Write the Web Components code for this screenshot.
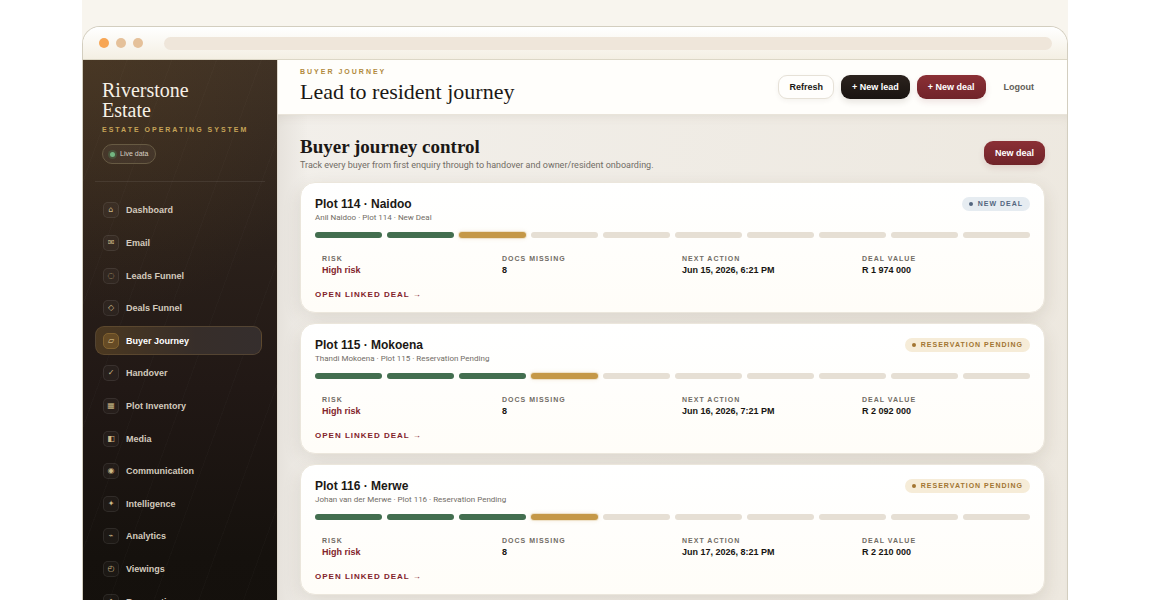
<!DOCTYPE html>
<html lang="en">
<head>
<meta charset="utf-8">
<meta name="viewport" content="width=device-width, initial-scale=1">
<title>Riverstone Estate – Buyer Journey</title>
<style>
html { scrollbar-width: none; }
body {
  margin: 0; background: #fff; color: #1b1815;
  font: 9px/12px "Liberation Sans", Arial, sans-serif;
  --serif: "Liberation Serif", "Times New Roman", serif;
  --text: Roboto, "Liberation Sans", sans-serif;
  --wine: #82232b; --gold: #c59847; --green: #436e4f; --line: #e4dfd4; --muted: #716c65;
}
</style>
</head>
<body>
<estate-app></estate-app>
<script>
const define = (name, html, setup) => {
  const template = document.createElement('template');
  template.innerHTML = html;
  customElements.define(name, class extends HTMLElement {
    constructor() {
      super();
      this.attachShadow({ mode: 'open' }).append(template.content.cloneNode(true));
    }
    connectedCallback() { if (setup) setup(this, this.shadowRoot); }
  });
};

define('browser-frame', `
<style>
:host { display: block; border: 1px solid #d3cebf; border-bottom: 0; border-radius: 18px 18px 0 0; overflow: hidden; background: #fff; }
.chrome { display: flex; align-items: center; gap: 7px; height: 32px; padding: 0 15px 0 16px; background: linear-gradient(#fff, #f4efe3); border-bottom: 1px solid #dcd7c6; }
i { width: 10px; height: 10px; border-radius: 50%; background: #e5c19a; }
i:first-child { background: #f7a654; }
.address { flex: 1; height: 13px; margin-left: 14px; border-radius: 7px; background: #efe6da; }
</style>
<div class="chrome"><i></i><i></i><i></i><div class="address"></div></div>
<slot></slot>`);

define('app-button', `
<style>
:host { display: block; }
button { display: block; height: 24px; padding: 0 10px; border: 1px solid transparent; border-radius: 9px; font: bold 9px/12px "Liberation Sans", Arial, sans-serif; color: #fff; white-space: nowrap; }
:host([kind="plain"]) button { background: #fffefc; color: #1b1815; border-color: #e6e1d7; box-shadow: 0 2px 5px #4030100d; }
:host([kind="dark"]) button { background: linear-gradient(#2c231e, #191411) border-box; box-shadow: 0 3px 6px #3020101f; }
:host([kind="wine"]) button { background: linear-gradient(#8b3035, #702329) border-box; box-shadow: 0 3px 6px #7023291f; }
:host([kind="ghost"]) button { background: none; color: #625d57; }
</style>
<button type="button"><slot></slot></button>`);

define('nav-item', `
<style>
:host { display: flex; align-items: center; }
a { flex: 1; display: flex; align-items: center; gap: 7px; box-sizing: border-box; height: 29px; padding: 0 7px; border: 1px solid transparent; border-radius: 9px; color: #d3cabd; font-weight: bold; text-decoration: none; }
span { box-sizing: border-box; width: 16px; height: 16px; display: grid; place-items: center; border: 1px solid #ffffff14; border-radius: 5px; background: #ffffff08; color: #cdb887; font: 8px/8px "DejaVu Sans", sans-serif; }
:host([active]) a { color: #fff; border-color: #715a3980; background: linear-gradient(90deg, #4b3820, #372e2a 60%, #352e2d); }
:host([active]) span { background: #664b25; border-color: #80612f; color: #ead39c; }
</style>
<a href="#"><span aria-hidden="true"></span><slot></slot></a>`, (host, root) => {
  root.querySelector('span').textContent = host.getAttribute('icon');
  if (host.hasAttribute('active')) root.querySelector('a').setAttribute('aria-current', 'page');
});

define('side-bar', `
<style>
:host { display: block; box-sizing: border-box; padding: 20px 12px 0; border-right: 1px solid #ded8cc; background:
  repeating-linear-gradient(110deg, transparent 0 41px, #ffffff04 41px 42px),
  radial-gradient(circle at 0 0, #6b4d2340, transparent 260px),
  linear-gradient(#3d3025, #2a201a 34%, #211815 58%, #15110d 88%, #14100c); }
.brand { padding: 0 7px 17px; border-bottom: 1px solid #ffffff14; }
h2 { margin: 0; font: 20px/20px var(--serif); color: #f6f0e6; }
p { margin: 6px 0 0; font-size: 7px; line-height: 8px; font-weight: bold; letter-spacing: 2px; color: #c6a458; white-space: nowrap; }
.live { display: inline-flex; align-items: center; gap: 5px; box-sizing: border-box; height: 20px; margin-top: 10px; padding: 0 7px; border: 1px solid #675a43; border-radius: 10px; background: #ffffff0c; color: #d9d1c5; font-size: 7px; vertical-align: top; }
.live i { width: 5px; height: 5px; border-radius: 50%; background: #73b681; box-shadow: 0 0 0 2px #4f8a5b55; }
nav { display: grid; grid-auto-rows: 1fr; height: 424px; margin-top: 12px; padding-right: 3px; }
</style>
<div class="brand"><h2>Riverstone<br>Estate</h2><p>ESTATE OPERATING SYSTEM</p><div class="live"><i></i>Live data</div></div>
<nav aria-label="Main"><slot></slot></nav>`);

define('top-bar', `
<style>
:host { display: flex; align-items: center; justify-content: space-between; height: 54px; padding: 0 22px; background: #fffefb; box-sizing: content-box; border-bottom: 1px solid #e9e4da; }
p { margin: 0; font-size: 7px; line-height: 8px; font-weight: bold; letter-spacing: 2px; color: #b18a3e; }
h1 { margin: 0; padding-top: 2px; font: 22px/28px var(--serif); }
.actions { display: flex; gap: 7px; }
</style>
<div><p>BUYER JOURNEY</p><h1>Lead to resident journey</h1></div>
<div class="actions"><slot></slot></div>`);

define('status-badge', `
<style>
:host { display: flex; align-items: center; gap: 5px; height: 14px; margin-top: 1px; padding: 0 7px; border-radius: 7px; background: #f6ecd8; color: #a27532; font-size: 7px; font-weight: bold; letter-spacing: 1px; white-space: nowrap; }
:host([tone="new"]) { background: #e6ecf1; color: #53667f; }
i { width: 4px; height: 4px; border-radius: 50%; background: currentColor; }
</style>
<i></i><slot></slot>`);

define('stage-track', `
<style>
:host { display: grid; grid-template-columns: repeat(10, 1fr); gap: 5px; }
i { height: 6px; border-radius: 3px; background: #e6dfd4; }
.done { background: var(--green); }
.now { background: var(--gold); box-shadow: 0 0 0 1px #c5984730, 0 0 4px #c5984740; }
</style>`, (host, root) => {
  const done = Number(host.getAttribute('done'));
  for (let n = 0; n < 10; n++) {
    const bar = document.createElement('i');
    bar.className = n < done ? 'done' : n === done ? 'now' : '';
    root.append(bar);
  }
});

define('deal-card', `
<style>
:host { display: block; padding: 13px 14px 11px; border: 1px solid #ebe6dc; border-radius: 15px; background: linear-gradient(#fff, #fffdf8); box-shadow: 0 6px 18px #4a3a241f; }
header { display: flex; justify-content: space-between; align-items: flex-start; }
h3 { margin: 0; font-size: 12px; line-height: 16px; }
p { margin: 0 0 8px; font: 8px/12px var(--text); color: var(--muted); }
dl { display: grid; grid-template-columns: repeat(4, 1fr); gap: 5px; margin: 15px 0 13px; }
dl div { padding-left: 7px; }
dt { font-size: 7px; line-height: 11px; font-weight: bold; letter-spacing: 1px; color: var(--muted); }
dd { margin: 0; line-height: 12px; font-weight: bold; color: #171411; }
.risk { color: var(--wine); }
a { display: block; width: max-content; font-size: 8px; line-height: 12px; font-weight: bold; letter-spacing: 1px; color: var(--wine); text-decoration: none; }
</style>
<header><div><h3></h3><p></p></div><status-badge></status-badge></header>
<stage-track></stage-track>
<dl>
<div><dt>RISK</dt><dd class="risk">High risk</dd></div>
<div><dt>DOCS MISSING</dt><dd>8</dd></div>
<div><dt>NEXT ACTION</dt><dd class="next"></dd></div>
<div><dt>DEAL VALUE</dt><dd class="value"></dd></div>
</dl>
<a href="#">OPEN LINKED DEAL →</a>`, (host, root) => {
  const get = name => host.getAttribute(name);
  root.querySelector('h3').textContent = get('name');
  root.querySelector('p').textContent = get('detail');
  root.querySelector('.next').textContent = get('next');
  root.querySelector('.value').textContent = get('value');
  const badge = root.querySelector('status-badge');
  badge.append(get('status'));
  if (get('status') === 'NEW DEAL') badge.setAttribute('tone', 'new');
  const track = document.createElement('stage-track');
  track.setAttribute('done', get('done'));
  root.querySelector('stage-track').replaceWith(track);
});

define('journey-panel', `
<style>
:host { display: block; padding: 19px 22px 30px; background: linear-gradient(90deg, #e6e2dc, transparent 30px), linear-gradient(100deg, #f2efea, #ede8df); box-shadow: inset 0 8px 12px -8px #6050301f; }
.head { display: flex; align-items: center; justify-content: space-between; margin-bottom: 10px; }
h2 { margin: 0; font: bold 19px/25px var(--serif); }
p { margin: 0; font: 9px/13px var(--text); color: var(--muted); }
.list { display: grid; gap: 10px; }
</style>
<div class="head"><div><h2>Buyer journey control</h2><p>Track every buyer from first enquiry through to handover and owner/resident onboarding.</p></div><app-button kind="wine">New deal</app-button></div>
<div class="list"><slot></slot></div>`);

define('estate-app', `
<style>
:host { display: block; margin: 0 82px; padding-top: 26px; background: #f8f5ee; }
.layout { display: grid; grid-template-columns: 195px 1fr; }
</style>
<browser-frame><div class="layout">
<side-bar>
<nav-item icon="⌂">Dashboard</nav-item>
<nav-item icon="✉">Email</nav-item>
<nav-item icon="◌">Leads Funnel</nav-item>
<nav-item icon="◇">Deals Funnel</nav-item>
<nav-item icon="▱" active>Buyer Journey</nav-item>
<nav-item icon="✓">Handover</nav-item>
<nav-item icon="▦">Plot Inventory</nav-item>
<nav-item icon="◧">Media</nav-item>
<nav-item icon="◉">Communication</nav-item>
<nav-item icon="✦">Intelligence</nav-item>
<nav-item icon="⌁">Analytics</nav-item>
<nav-item icon="◴">Viewings</nav-item>
<nav-item icon="◆">Reservations</nav-item>
</side-bar>
<main>
<top-bar>
<app-button kind="plain">Refresh</app-button>
<app-button kind="dark">+ New lead</app-button>
<app-button kind="wine">+ New deal</app-button>
<app-button kind="ghost">Logout</app-button>
</top-bar>
<journey-panel>
<deal-card name="Plot 114 · Naidoo" detail="Anil Naidoo · Plot 114 · New Deal" status="NEW DEAL" done="2" next="Jun 15, 2026, 6:21 PM" value="R 1 974 000"></deal-card>
<deal-card name="Plot 115 · Mokoena" detail="Thandi Mokoena · Plot 115 · Reservation Pending" status="RESERVATION PENDING" done="3" next="Jun 16, 2026, 7:21 PM" value="R 2 092 000"></deal-card>
<deal-card name="Plot 116 · Merwe" detail="Johan van der Merwe · Plot 116 · Reservation Pending" status="RESERVATION PENDING" done="3" next="Jun 17, 2026, 8:21 PM" value="R 2 210 000"></deal-card>
</journey-panel>
</main>
</div></browser-frame>`);
</script>
</body>
</html>
